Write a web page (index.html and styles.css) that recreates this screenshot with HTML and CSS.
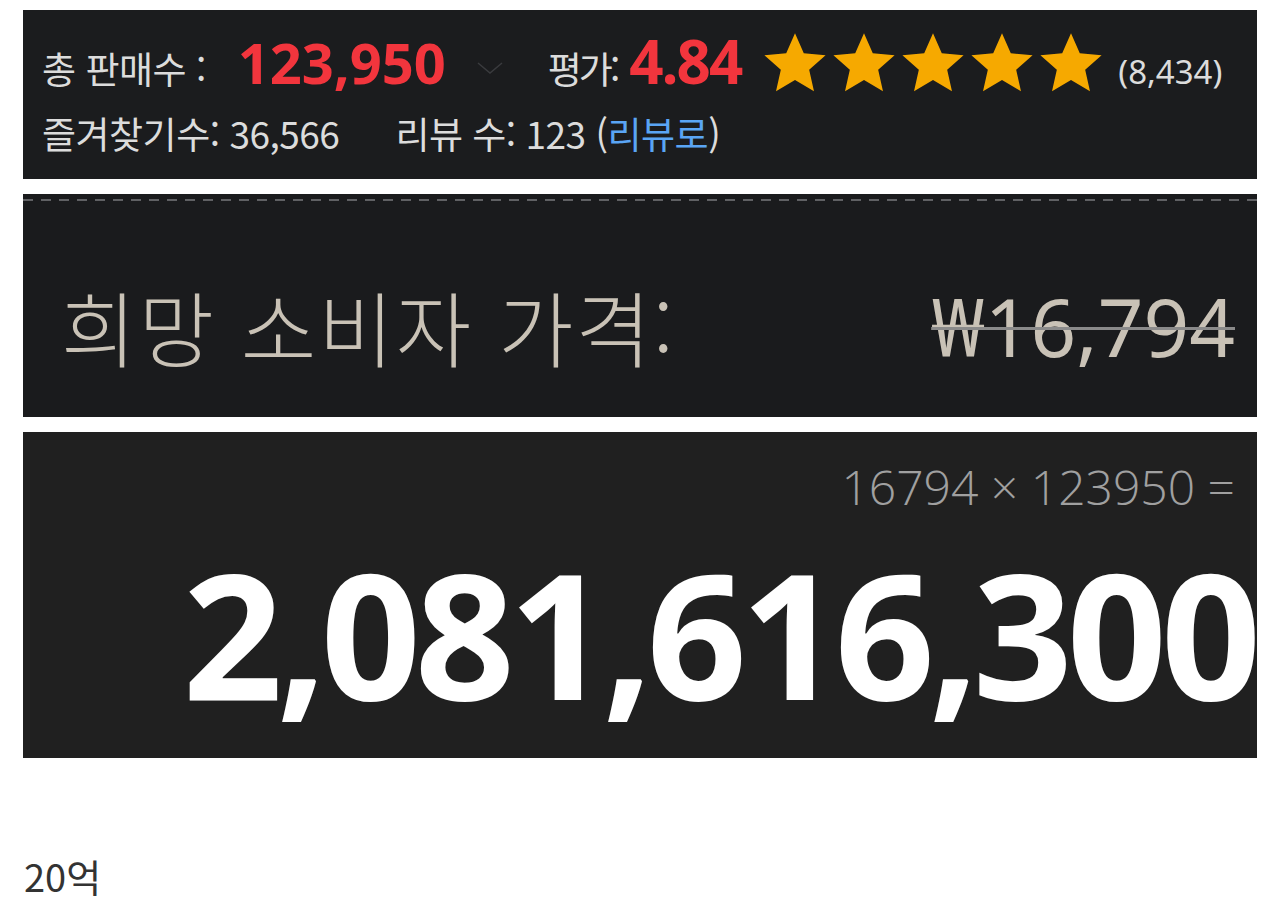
FILE: index.html
```html
<!DOCTYPE html>
<html lang="ko">
<head>
    <meta charset="UTF-8">
    <meta name="viewport" content="width=device-width, initial-scale=1.0">
    <title>20억</title>
    <link rel="stylesheet" href="styles.css">
</head>
<body>

<div class="page">
    <div class="panel stats">
        <div class="stats-row first">
            <span class="label">총 판매수 :</span>
            <span class="big-red sales">123,950</span>
            <svg class="chevron" width="28" height="14" viewBox="0 0 28 14">
                <polyline points="2,2 14,12 26,2" fill="none" stroke="#3a3b3e" stroke-width="1.5"/>
            </svg>
            <span class="label narrow rating-label">평가:</span>
            <span class="big-red rating">4.84</span>
            <span class="stars">
                <svg viewBox="0 0 24 24"><polygon points="12,1.5 15.1,8.6 22.8,9.3 17,14.4 18.7,22 12,18 5.3,22 7,14.4 1.2,9.3 8.9,8.6"/></svg>
                <svg viewBox="0 0 24 24"><polygon points="12,1.5 15.1,8.6 22.8,9.3 17,14.4 18.7,22 12,18 5.3,22 7,14.4 1.2,9.3 8.9,8.6"/></svg>
                <svg viewBox="0 0 24 24"><polygon points="12,1.5 15.1,8.6 22.8,9.3 17,14.4 18.7,22 12,18 5.3,22 7,14.4 1.2,9.3 8.9,8.6"/></svg>
                <svg viewBox="0 0 24 24"><polygon points="12,1.5 15.1,8.6 22.8,9.3 17,14.4 18.7,22 12,18 5.3,22 7,14.4 1.2,9.3 8.9,8.6"/></svg>
                <svg viewBox="0 0 24 24"><polygon points="12,1.5 15.1,8.6 22.8,9.3 17,14.4 18.7,22 12,18 5.3,22 7,14.4 1.2,9.3 8.9,8.6"/></svg>
            </span>
            <span class="count">(8,434)</span>
        </div>
        <div class="stats-row second">
            <span class="label">즐겨찾기수: 36,566</span>
            <span class="label reviews">리뷰 수: 123 (<a class="review-link" href="#">리뷰로</a>)</span>
        </div>
    </div>

    <div class="panel price">
        <div class="dash-line"></div>
        <div class="price-row">
            <span class="price-label">희망 소비자 가격:</span>
            <span class="price-value">₩16,794</span>
        </div>
    </div>

    <div class="panel calc">
        <div class="formula">16794 × 123950 =</div>
        <div class="result">2,081,616,300</div>
    </div>

    <p class="caption">20억</p>
</div>

</body>
</html>
```

FILE: styles.css
```css
body {
    margin: 0;
    background-color: #ffffff;
    font-family: "Noto Sans CJK KR", "Noto Sans", sans-serif;
    color: #333;
}
.page {
    padding: 10px 23px 0 23px;
    width: 1234px;
}
.panel {
    box-sizing: border-box;
    overflow: hidden;
}
.panel + .panel {
    margin-top: 15px;
}

/* stats panel */
.stats {
    background-color: #1b1c1e;
    height: 169px;
    padding: 21px 0 0 19px;
}
.stats-row {
    display: flex;
    align-items: baseline;
    white-space: nowrap;
}
.stats-row.second {
    margin-top: 16px;
}
.label {
    font-size: 37px;
    line-height: 1.1;
    color: #dcdcdc;
    letter-spacing: -0.5px;
}
.narrow {
    letter-spacing: -3px;
}
.big-red {
    font-family: "Open Sans", "Noto Sans", sans-serif;
    font-weight: 700;
    line-height: 1;
    color: #f2353d;
}
.sales {
    font-size: 56px;
    margin-left: 32px;
}
.chevron {
    margin-left: 30px;
    align-self: center;
    margin-top: 8px;
}
.rating-label {
    margin-left: 44px;
}
.rating {
    font-size: 60px;
    margin-left: 12px;
    letter-spacing: -2px;
}
.stars {
    display: flex;
    margin-left: 18px;
    align-self: center;
    margin-top: -2px;
}
.stars svg {
    width: 72px;
    height: 68px;
    margin-right: -3px;
    fill: #f6a900;
}
.count {
    font-family: "Noto Sans", sans-serif;
    font-size: 33px;
    line-height: 1;
    color: #dcdcdc;
    margin-left: 14px;
    letter-spacing: 0;
}
.reviews {
    margin-left: 56px;
}
.review-link {
    color: #5aa5f5;
    text-decoration: none;
}

/* price panel */
.price {
    background-color: #1a1b1d;
    height: 223px;
    padding-top: 5px;
}
.dash-line {
    height: 2px;
    background: repeating-linear-gradient(to right, #606164 0, #606164 10px, transparent 10px, transparent 18px);
}
.price-row {
    display: flex;
    justify-content: space-between;
    align-items: center;
    height: 206px;
    padding: 42px 22px 0 38px;
    box-sizing: border-box;
}
.price-label {
    font-size: 82px;
    font-weight: 300;
    color: #c9c2b6;
    letter-spacing: 2px;
}
.price-value {
    font-family: "Noto Sans", sans-serif;
    font-size: 80px;
    color: #c9c2b6;
    text-decoration: line-through;
    text-decoration-color: #8a8a8a;
    text-decoration-thickness: 3px;
}

/* calc panel */
.calc {
    background-color: #202020;
    height: 326px;
    text-align: right;
    padding: 22px 22px 0 0;
}
.formula {
    font-family: "Open Sans", "Noto Sans", sans-serif;
    font-weight: 300;
    font-size: 48px;
    color: #a0a0a0;
    line-height: 66px;
}
.result {
    font-family: "Open Sans", "Noto Sans", sans-serif;
    font-weight: 700;
    font-size: 175px;
    color: #ffffff;
    line-height: 224px;
    margin-right: -20px;
    letter-spacing: -6px;
}

.caption {
    margin: 90px 0 0 1px;
    font-size: 38px;
    color: #333333;
}
```
